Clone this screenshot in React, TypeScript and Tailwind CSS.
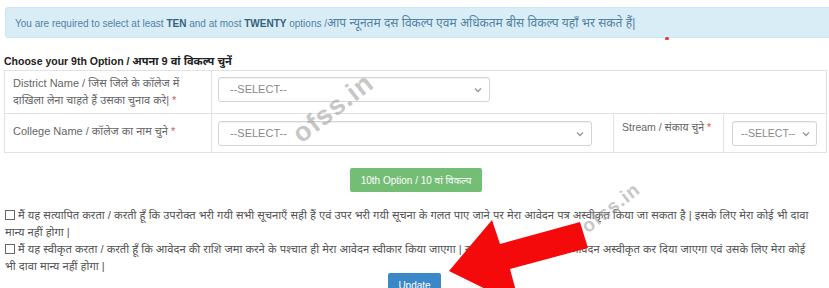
import React from 'react';

function SelectBox({ className }: { className: string }) {
  return (
    <div
      className={`h-[25px] flex items-center justify-between whitespace-nowrap border border-[#d4d4d4] rounded-[3px] bg-white shadow-[inset_0_1px_1px_rgba(0,0,0,0.06)] text-[#888] ${className}`}
    >
      <span>--SELECT--</span>
      <svg width="8" height="6" viewBox="0 0 8 6" className="shrink-0 text-[#999]">
        <path d="M1 1.5 L4 4.5 L7 1.5" fill="none" stroke="currentColor" strokeWidth="1.4" />
      </svg>
    </div>
  );
}

function Watermark({ className }: { className: string }) {
  return (
    <span
      className={`absolute font-bold text-[#9a9a9a] opacity-55 select-none pointer-events-none tracking-[1px] ${className}`}
    >
      ofss.in
    </span>
  );
}

export default function App() {
  return (
    <div className="relative w-[829px] h-[288px] overflow-hidden bg-white font-['Liberation_Sans','Noto_Sans',sans-serif] text-[#555]">
      {/* notice */}
      <div className="mt-[7px] ml-[5px] mr-[-4px] h-[31px] flex items-center px-[9px] bg-[#d9edf7] border border-[#c9e6f2] rounded-[3px] text-[10px] text-[#5282a2]">
        <span>
          You are required to select at least <b className="text-[#35617e]">TEN</b> and at most{' '}
          <b className="text-[#35617e]">TWENTY</b> options /
          <span className="text-[12px]">आप न्यूनतम दस विकल्प एवम अधिकतम बीस विकल्प यहाँ भर सकते हैं|</span>
        </span>
      </div>

      <h4 className="mt-[17px] ml-[4px] text-[10.5px] leading-[13px] font-bold text-[#222]">
        Choose your 9th Option / <span className="text-[11px]">अपना 9 वां विकल्प चुनें</span>
      </h4>

      {/* option table */}
      <div className="mt-[2px] ml-[4px] w-[823px] border border-[#e2e2e2] text-[11px] leading-[17px] text-[#666]">
        <div className="flex border-b border-[#e2e2e2]">
          <div className="w-[207px] shrink-0 border-r border-[#e2e2e2] px-[8px] pt-[4px] pb-[4px]">
            District Name / जिस जिले के कॉलेज में
            <br />
            दाखिला लेना चाहते हैं उसका चुनाव करे| <span className="text-[#d9534f]">*</span>
          </div>
          <div className="flex-1 px-[6px] pt-[6px]">
            <SelectBox className="w-[272px] pl-[11px] pr-[7px] text-[11px]" />
          </div>
        </div>
        <div className="flex h-[38px]">
          <div className="w-[207px] shrink-0 border-r border-[#e2e2e2] px-[8px] pt-[9px]">
            College Name / कॉलेज का नाम चुने <span className="text-[#d9534f]">*</span>
          </div>
          <div className="w-[402px] shrink-0 border-r border-[#e2e2e2] px-[6px] pt-[7px]">
            <SelectBox className="w-[374px] pl-[11px] pr-[7px] text-[11px]" />
          </div>
          <div className="w-[110px] shrink-0 border-r border-[#e2e2e2] pl-[8px] pt-[5px] whitespace-nowrap text-[10.5px]">
            Stream / संकाय चुने <span className="text-[#d9534f]">*</span>
          </div>
          <div className="flex-1 pl-[8px] pt-[7px]">
            <SelectBox className="w-[85px] pl-[8px] pr-[6px] text-[10.5px]" />
          </div>
        </div>
      </div>

      <div className="mt-[15px] flex justify-center pl-[3px]">
        <button className="w-[132px] h-[24px] bg-[#74bd74] text-white text-[10px] rounded-[2px]">
          10th Option / 10 वां विकल्प
        </button>
      </div>

      {/* declarations */}
      <div className="mt-[15px] pl-[5px] pr-[6px] text-[11.2px] leading-[17px] text-[#555]">
        <p>
          <span className="inline-block w-[10px] h-[10px] border border-[#666] align-[-1px] mr-[3px]" />
          मैं यह सत्यापित करता / करती हूँ कि उपरोक्त भरी गयी सभी सूचनाएँ सही हैं एवं उपर भरी गयी सूचना के गलत पाए जाने पर मेरा आवेदन पत्र अस्वीकृत किया जा सकता है | इसके लिए मेरा कोई भी दावा मान्य नहीं होगा |
        </p>
        <p>
          <span className="inline-block w-[10px] h-[10px] border border-[#666] align-[-1px] mr-[3px]" />
          मैं यह स्वीकृत करता / करती हूँ कि आवेदन की राशि जमा करने के पश्चात ही मेरा आवेदन स्वीकार किया जाएगा | राशि जमा न करने पर मेरा आवेदन अस्वीकृत कर दिया जाएगा एवं उसके लिए मेरा कोई
          <br />
          भी दावा मान्य नहीं होगा |
        </p>
        <div className="mt-[-2px] flex justify-center pl-[1px]">
          <button className="w-[53px] h-[24px] bg-[#3b88c9] text-white text-[10px] rounded-[2px]">Update</button>
        </div>
      </div>

      {/* overlays from the screenshot */}
      <Watermark className="left-[286px] top-[88px] text-[27px] -rotate-[38deg]" />
      <Watermark className="left-[577px] top-[194px] text-[19px] -rotate-[38deg]" />
      <span className="absolute left-[665px] top-[37px] w-[4px] h-[3px] rounded-full bg-[#e33]" />
      <svg className="absolute left-0 top-0 pointer-events-none" width="829" height="288" viewBox="0 0 829 288">
        <polygon
          points="449,271 492,220 500,244 580,222 588,248 510,269 520,306"
          fill="#f40a0a"
        />
      </svg>
    </div>
  );
}
